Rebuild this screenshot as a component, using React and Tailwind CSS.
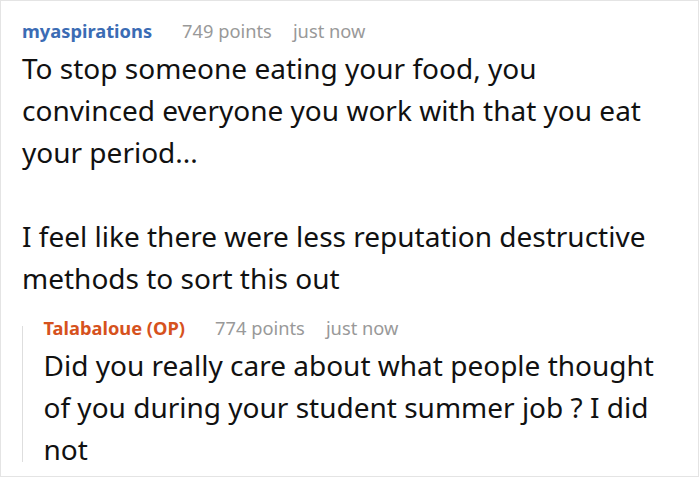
import React from 'react';

function Meta({ name, color, points }) {
  return (
    <div className="flex items-baseline text-[18.3px] leading-[27px]">
      <span className={`font-bold ${color}`}>{name}</span>
      <span className="ml-[30px] text-[#999]">{points} points</span>
      <span className="ml-[21px] text-[#999]">just now</span>
    </div>
  );
}

function App() {
  return (
    <div
      className="w-[699px] h-[477px] border border-[#e4e4e4] bg-white pl-[21px] pt-[16px] overflow-hidden"
      style={{ fontFamily: '"Noto Sans", "Open Sans", sans-serif' }}
    >
      {/* Parent comment */}
      <Meta name="myaspirations" color="text-[#3b6cb4]" points="749" />
      <div className="mt-[3px] text-[28px] leading-[42px] text-[#111] pr-[30px]">
        <p>To stop someone eating your food, you convinced everyone you work with that you eat your period...</p>
        <p className="h-[42px]"></p>
        <p>I feel like there were less reputation destructive methods to sort this out</p>
      </div>

      {/* Reply */}
      <div className="flex mt-[15px]">
        <div className="w-px bg-[#dedede] mt-[12px] mb-[8px]"></div>
        <div className="pl-[21px]">
          <Meta name="Talabaloue (OP)" color="text-[#d6521d]" points="774" />
          <div className="mt-[3px] text-[28px] leading-[42px] text-[#111] pr-[30px]">
            <p>Did you really care about what people thought of you during your student summer job ? I did not</p>
          </div>
        </div>
      </div>
    </div>
  );
}

export default App;
